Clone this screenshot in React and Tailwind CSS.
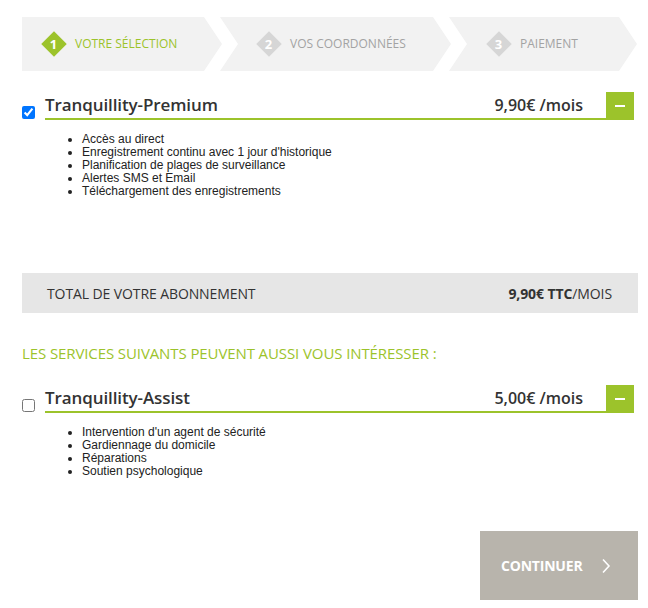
import React from 'react';

const green = 'bg-[#9cc32b]';

const Step = ({ num, label, active, first, className }) => (
  <div
    className={`h-[54px] bg-[#f2f2f2] flex items-center ${
      first
        ? '[clip-path:polygon(0_0,calc(100%-18px)_0,100%_50%,calc(100%-18px)_100%,0_100%)]'
        : '[clip-path:polygon(0_0,calc(100%-18px)_0,100%_50%,calc(100%-18px)_100%,0_100%,18px_50%)]'
    } ${className}`}
  >
    <div
      className={`w-[18px] h-[18px] rotate-45 flex items-center justify-center shrink-0 ${
        active ? 'bg-[#9cc32b]' : 'bg-[#d6d6d6]'
      }`}
    >
      <span className="-rotate-45 text-white text-[13px] font-bold leading-none">{num}</span>
    </div>
    <span className={`ml-[12px] text-[12px] ${active ? 'text-[#9cc32b]' : 'text-[#a3a3a3]'}`}>
      {label}
    </span>
  </div>
);

const Product = ({ name, price, checked, items }) => (
  <div>
    <div className="flex items-stretch mr-[4px]">
      <div className="w-[23px] flex items-end pb-[1px]">
        <input type="checkbox" defaultChecked={checked} className="w-[13px] h-[13px] m-0" />
      </div>
      <div className="flex-1 flex items-center justify-between border-b-2 border-[#9cc32b] h-[28px]">
        <span className="text-[17px] font-semibold text-[#333] tracking-[-0.1px]">{name}</span>
        <span className="text-[16px] font-semibold text-[#333] mr-[23px]">{price}</span>
      </div>
      <button className={`${green} w-[28px] h-[28px] flex items-center justify-center`}>
        <span className="block w-[10px] h-[2.5px] bg-white" />
      </button>
    </div>
    <ul className="mt-[13px] pl-[60px] list-disc text-[12px] leading-[13px] text-[#222] [font-family:'Liberation_Sans',Arial,sans-serif]">
      {items.map((it) => (
        <li key={it}>{it}</li>
      ))}
    </ul>
  </div>
);

export default function App() {
  return (
    <div className="w-[648px] h-[608px] bg-white pl-[22px] pr-[10px] pt-[17px] [font-family:'Open_Sans',sans-serif] overflow-hidden">
      <div className="flex">
        <Step num="1" label="VOTRE SÉLECTION" active first className="w-[200px] pl-[23px]" />
        <Step num="2" label="VOS COORDONNÉES" className="w-[231px] -ml-[2px] pl-[40px]" />
        <Step num="3" label="PAIEMENT" className="w-[188px] -ml-[2px] pl-[41px]" />
      </div>

      <div className="mt-[21px]">
        <Product
          name="Tranquillity-Premium"
          price="9,90€ /mois"
          checked
          items={[
            'Accès au direct',
            "Enregistrement continu avec 1 jour d'historique",
            'Planification de plages de surveillance',
            'Alertes SMS et Email',
            'Téléchargement des enregistrements',
          ]}
        />
      </div>

      <div className="mt-[75px] h-[40px] bg-[#e6e6e6] flex items-center justify-between pl-[25px] pr-[26px] text-[14px] text-[#333] tracking-[-0.1px]">
        <span>TOTAL DE VOTRE ABONNEMENT</span>
        <span>
          <span className="font-bold">9,90€ TTC</span>/MOIS
        </span>
      </div>

      <div className="mt-[30px] text-[15px] leading-[20px] text-[#9cc32b] tracking-[-0.1px]">
        LES SERVICES SUIVANTS PEUVENT AUSSI VOUS INTÉRESSER :
      </div>

      <div className="mt-[22px]">
        <Product
          name="Tranquillity-Assist"
          price="5,00€ /mois"
          items={[
            "Intervention d'un agent de sécurité",
            'Gardiennage du domicile',
            'Réparations',
            'Soutien psychologique',
          ]}
        />
      </div>

      <div className="flex justify-end mt-[53px]">
        <button className="w-[158px] h-[69px] bg-[#b8b4ac] flex items-center pl-[21px] text-white text-[14px] font-bold tracking-[-0.2px]">
          CONTINUER
          <svg width="10" height="16" viewBox="0 0 10 16" className="ml-[19px]">
            <path d="M2 1.5 L8 8 L2 14.5" fill="none" stroke="white" strokeWidth="1.6" />
          </svg>
        </button>
      </div>
    </div>
  );
}
